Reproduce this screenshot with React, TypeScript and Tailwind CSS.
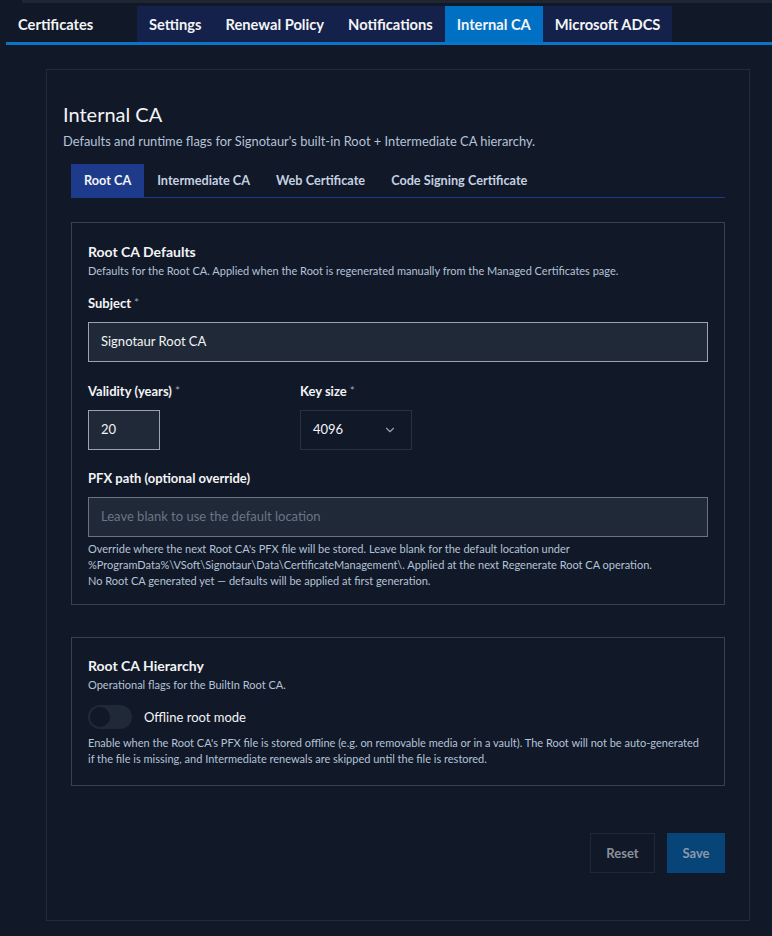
import React from 'react';
import { ChevronDown } from 'lucide-react';

const topTabs = ['Settings', 'Renewal Policy', 'Notifications', 'Internal CA', 'Microsoft ADCS'];
const subTabs = ['Root CA', 'Intermediate CA', 'Web Certificate', 'Code Signing Certificate'];

const Label: React.FC<{ text: string; required?: boolean }> = ({ text, required }) => (
  <div className="text-[13px] font-bold text-gray-100 leading-5 mb-[9px]">
    {text}
    {required && <span className="text-gray-400 font-normal text-[12px] align-top ml-[3px]">*</span>}
  </div>
);

const App: React.FC = () => {
  return (
    <div className="min-h-[936px] w-[772px] bg-[#111827] text-gray-100 font-['Lato',sans-serif]">
      {/* top strip */}
      <div className="h-[3px] ml-[22px] bg-[#1e2533]" />

      {/* main tabs */}
      <div className="pt-[3px] pl-[6px]">
        <div className="flex h-[36px] border-b-[3px] border-[#0a74c9] box-content">
          <div className="w-[131px] flex items-center pl-[12px] text-[14.7px] font-bold">Certificates</div>
          {topTabs.map((t) => (
            <div
              key={t}
              className={
                t === 'Internal CA'
                  ? 'px-[12px] flex items-center text-[14.7px] font-bold bg-[#0070c4]'
                  : 'px-[12px] flex items-center text-[14.7px] font-bold bg-[#14214a]'
              }
            >
              {t}
            </div>
          ))}
        </div>
      </div>

      {/* outer card */}
      <div className="mt-[24px] ml-[46px] w-[704px] h-[852px] border border-[#222b3a] px-[16px] pt-[30px]">
        <h1 className="text-[20px] leading-7 text-gray-100">Internal CA</h1>
        <p className="text-[12.9px] text-[#b4c3d8] mt-[4px]">
          Defaults and runtime flags for Signotaur's built-in Root + Intermediate CA hierarchy.
        </p>

        <div className="mx-[8px] mt-[13px] flex border-b border-[#1e3a8a] h-[34px]">
          {subTabs.map((t) => (
            <div
              key={t}
              className={
                t === 'Root CA'
                  ? 'px-[13px] flex items-center text-[12.7px] font-bold bg-[#1e3a8a] text-gray-100'
                  : 'px-[13px] flex items-center text-[12.7px] font-bold text-[#c5d1e2]'
              }
            >
              {t}
            </div>
          ))}
        </div>

        {/* Root CA defaults */}
        <div className="mx-[8px] mt-[24px] border border-[#374151] px-[16px] pt-[19px] pb-[15px]">
          <h2 className="text-[14px] font-bold leading-5">Root CA Defaults</h2>
          <p className="text-[11px] text-[#b4c3d8] mt-[1px]">
            Defaults for the Root CA. Applied when the Root is regenerated manually from the Managed Certificates page.
          </p>

          <div className="mt-[13px]">
            <Label text="Subject" required />
            <div className="h-[40px] bg-[#1f2937] border border-[#9aa3b0] flex items-center px-[12px] text-[13px]">
              Signotaur Root CA
            </div>
          </div>

          <div className="mt-[19px] flex">
            <div className="w-[212px]">
              <Label text="Validity (years)" required />
              <div className="w-[72px] h-[40px] bg-[#1f2937] border border-[#9aa3b0] flex items-center px-[12px] text-[13px]">
                20
              </div>
            </div>
            <div>
              <Label text="Key size" required />
              <div className="w-[112px] h-[40px] border border-[#273142] flex items-center justify-between pl-[12px] pr-[14px] text-[13px]">
                4096
                <ChevronDown size={14} className="text-gray-400" />
              </div>
            </div>
          </div>

          <div className="mt-[18px]">
            <Label text="PFX path (optional override)" />
            <div className="h-[40px] bg-[#1f2937] border border-[#6b7280] flex items-center px-[12px] text-[13px] text-[#6b7585]">
              Leave blank to use the default location
            </div>
            <div className="mt-[4px] text-[11px] leading-4 text-[#b4c3d8]">
              <p>Override where the next Root CA's PFX file will be stored. Leave blank for the default location under</p>
              <p>%ProgramData%\VSoft\Signotaur\Data\CertificateManagement\. Applied at the next Regenerate Root CA operation.</p>
              <p>No Root CA generated yet — defaults will be applied at first generation.</p>
            </div>
          </div>
        </div>

        {/* Root CA hierarchy */}
        <div className="mx-[8px] mt-[32px] border border-[#374151] px-[16px] pt-[18px] pb-[18px]">
          <h2 className="text-[14px] font-bold leading-5">Root CA Hierarchy</h2>
          <p className="text-[11px] text-[#b4c3d8] mt-[1px]">Operational flags for the BuiltIn Root CA.</p>
          <div className="mt-[12px] flex items-center gap-[12px]">
            <div className="w-[44px] h-[24px] rounded-full bg-[#1f2937] flex items-center px-[2px]">
              <div className="w-[20px] h-[20px] rounded-full bg-[#111827]" />
            </div>
            <span className="text-[13px] text-gray-100">Offline root mode</span>
          </div>
          <div className="mt-[6px] text-[11px] leading-4 text-[#b4c3d8]">
            <p>
              Enable when the Root CA's PFX file is stored offline (e.g. on removable media or in a vault). The Root will not be auto-generated
            </p>
            <p>if the file is missing, and Intermediate renewals are skipped until the file is restored.</p>
          </div>
        </div>

        <div className="mx-[8px] mt-[47px] flex justify-end gap-[12px]">
          <button className="w-[65px] h-[40px] border border-[#1f2937] text-[13px] font-bold text-[#8a919c]">Reset</button>
          <button className="w-[58px] h-[40px] bg-[#074477] text-[13px] font-bold text-[#8a99ab]">Save</button>
        </div>
      </div>
    </div>
  );
};

export default App;
